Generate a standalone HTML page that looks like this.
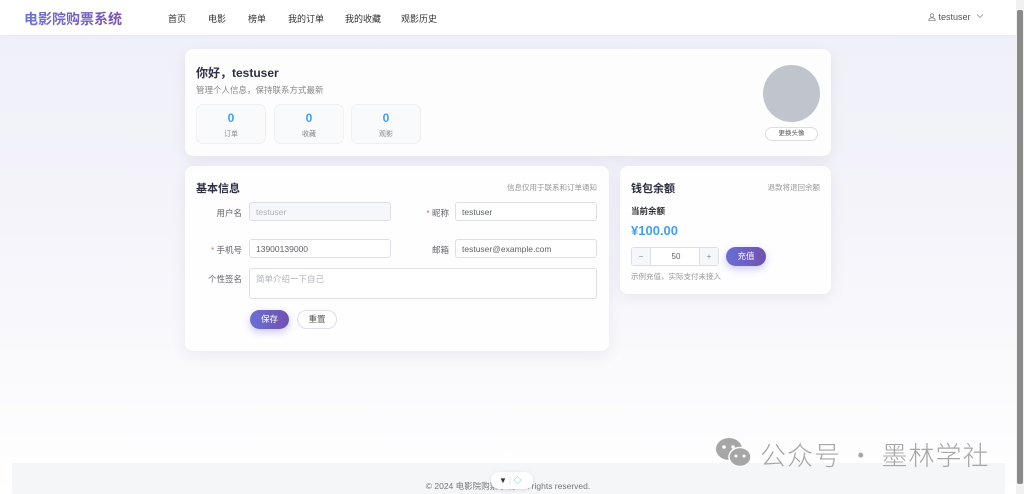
<!DOCTYPE html>
<html><head><meta charset="utf-8">
<style>
*{box-sizing:border-box;margin:0;padding:0}
body{width:1024px;height:494px;overflow:hidden;font-family:"Liberation Sans","Noto Sans CJK SC",sans-serif;background:linear-gradient(180deg,#eef0f8 0%,#f4f3fa 40%,#fbfbfd 80%,#fff 100%);position:relative;color:#303133}
.hdr{position:absolute;left:0;top:0;width:1016px;height:35px;background:#fff;box-shadow:0 1px 3px rgba(0,0,0,.04)}
.logo{position:absolute;left:24px;top:9px;font-size:14px;font-weight:bold;background:linear-gradient(90deg,#6a74d8,#7a4fb0);-webkit-background-clip:text;color:transparent}
.nav{position:absolute;top:12px;font-size:9px;color:#303133}
.user{position:absolute;left:928px;top:12px;font-size:9px;color:#555}
.card{position:absolute;background:rgba(255,255,255,.85);border-radius:8px;box-shadow:0 4px 14px rgba(120,120,160,.12)}
.abs{position:absolute}
.stat{position:absolute;top:104px;width:70px;height:40px;border:1px solid #eef0f4;border-radius:7px;background:#f9fafc;text-align:center}
.stat b{display:block;color:#409eff;font-size:12px;margin-top:6px}
.stat span{display:block;color:#888;font-size:7px;margin-top:4px}
.lbl{position:absolute;font-size:8.5px;color:#606266;text-align:right}
.inp{position:absolute;height:19px;border:1px solid #dcdfe6;border-radius:3px;background:#fff;font-size:8.5px;color:#606266;padding:4px 6px}
.star{color:#f56c6c}
.btn{position:absolute;border-radius:10px;font-size:8.5px;text-align:center}
.pri{background:linear-gradient(90deg,#6a6fd6,#7150b0);color:#fff;box-shadow:0 3px 8px rgba(106,100,214,.35)}
</style></head><body>
<div class="hdr">
<div class="logo">电影院购票系统</div>
<div class="nav" style="left:168px">首页</div>
<div class="nav" style="left:208px">电影</div>
<div class="nav" style="left:248px">榜单</div>
<div class="nav" style="left:288px">我的订单</div>
<div class="nav" style="left:345px">我的收藏</div>
<div class="nav" style="left:401px">观影历史</div>
<div class="user"><svg width="8" height="8" viewBox="0 0 10 10" style="vertical-align:-1px"><circle cx="5" cy="3.2" r="2.2" fill="none" stroke="#888"/><path d="M1 9.5c0-2.5 2-3.5 4-3.5s4 1 4 3.5z" fill="none" stroke="#888"/></svg> testuser &nbsp;<svg width="8" height="6" viewBox="0 0 8 6" style="vertical-align:1px"><path d="M1 1.5l3 3 3-3" fill="none" stroke="#aaa"/></svg></div>
</div>

<div class="card" style="left:185px;top:49px;width:646px;height:107px">
<div class="abs" style="left:11px;top:15px;font-size:12px;font-weight:bold;color:#2c3040">你好，testuser</div>
<div class="abs" style="left:11px;top:35px;font-size:8.5px;color:#888">管理个人信息，保持联系方式最新</div>
<div class="abs" style="left:578px;top:16px;width:57px;height:57px;border-radius:50%;background:#c0c4cc"></div>
<div class="abs" style="left:580px;top:78px;width:53px;height:14px;border:1px solid #dcdfe6;border-radius:7px;background:#fff;font-size:6.5px;color:#555;text-align:center;line-height:12px">更换头像</div>
</div>
<div class="stat" style="left:196px"><b>0</b><span>订单</span></div>
<div class="stat" style="left:274px"><b>0</b><span>收藏</span></div>
<div class="stat" style="left:351px"><b>0</b><span>观影</span></div>

<div class="card" style="left:185px;top:166px;width:424px;height:185px">
<div class="abs" style="left:11px;top:14px;font-size:11px;font-weight:bold;color:#2c3040">基本信息</div>
<div class="abs" style="right:12px;top:16px;font-size:7.5px;color:#999">信息仅用于联系和订单通知</div>
</div>
<div class="lbl" style="left:200px;top:207px;width:42px">用户名</div>
<div class="inp" style="left:249px;top:202px;width:142px;background:#f5f7fa;color:#b0b3b8">testuser</div>
<div class="lbl" style="left:405px;top:207px;width:44px"><span class="star">*</span> 昵称</div>
<div class="inp" style="left:455px;top:202px;width:142px">testuser</div>
<div class="lbl" style="left:200px;top:244px;width:42px"><span class="star">*</span> 手机号</div>
<div class="inp" style="left:249px;top:239px;width:142px">13900139000</div>
<div class="lbl" style="left:405px;top:244px;width:44px">邮箱</div>
<div class="inp" style="left:455px;top:239px;width:142px">testuser@example.com</div>
<div class="lbl" style="left:195px;top:273px;width:47px">个性签名</div>
<div class="inp" style="left:249px;top:268px;width:348px;height:31px;color:#b0b3b8">简单介绍一下自己</div>
<div class="btn pri" style="left:250px;top:310px;width:39px;height:19px;line-height:19px">保存</div>
<div class="btn" style="left:297px;top:310px;width:40px;height:19px;line-height:17px;border:1px solid #dcdfe6;background:#fff;color:#555">重置</div>

<div class="card" style="left:620px;top:166px;width:211px;height:128px">
<div class="abs" style="left:11px;top:14px;font-size:11px;font-weight:bold;color:#2c3040">钱包余额</div>
<div class="abs" style="right:11px;top:16px;font-size:7.5px;color:#999">退款将退回余额</div>
<div class="abs" style="left:11px;top:39px;font-size:8.5px;font-weight:bold;color:#303133">当前余额</div>
<div class="abs" style="left:11px;top:57px;font-size:13px;font-weight:bold;color:#409eff">¥100.00</div>
<div class="abs" style="left:11px;top:81px;width:88px;height:19px;border:1px solid #dcdfe6;border-radius:3px;background:#fff;font-size:8px;color:#606266">
<div class="abs" style="left:0;top:0;width:19px;height:17px;background:#f5f7fa;border-right:1px solid #dcdfe6;text-align:center;line-height:17px;color:#888">−</div>
<div class="abs" style="left:19px;top:0;width:50px;text-align:center;line-height:17px">50</div>
<div class="abs" style="right:0;top:0;width:19px;height:17px;background:#f5f7fa;border-left:1px solid #dcdfe6;text-align:center;line-height:17px;color:#888">+</div>
</div>
<div class="btn pri" style="left:106px;top:81px;width:40px;height:19px;line-height:19px">充值</div>
<div class="abs" style="left:11px;top:105px;font-size:7.5px;color:#999">示例充值，实际支付未接入</div>
</div>

<div class="abs" style="left:12px;top:463px;width:993px;height:31px;background:#f5f6f8"></div>
<div class="abs" style="left:0;top:480px;width:1016px;text-align:center;font-size:8.5px;color:#777">© 2024 电影院购票系统. All rights reserved.</div>
<div class="abs" style="left:491px;top:472px;width:42px;height:17px;border-radius:8px;background:#fff;box-shadow:0 1px 4px rgba(0,0,0,.12);font-size:8px;line-height:17px;padding-left:8px;color:#333">▼ <span style="color:#ddd">|</span> <span style="color:#3c8">◇</span></div>

<svg class="abs" style="left:714px;top:437px" width="40" height="32" viewBox="0 0 40 32"><ellipse cx="15" cy="12" rx="13" ry="11" fill="#a6a6a6"/><ellipse cx="26" cy="20" rx="11" ry="9.5" fill="#a6a6a6" stroke="#fff" stroke-width="1.5"/><circle cx="10" cy="10" r="1.8" fill="#fff"/><circle cx="19" cy="10" r="1.8" fill="#fff"/><circle cx="22" cy="19" r="1.5" fill="#fff"/><circle cx="30" cy="19" r="1.5" fill="#fff"/></svg>
<div class="abs" style="left:760px;top:436px;font-size:26px;color:#a6a6a6;letter-spacing:1px;font-family:'Noto Sans CJK SC',sans-serif;font-weight:300">公众号 · 墨林学社</div>

<div class="abs" style="left:1016px;top:0;width:8px;height:494px;background:#f1f1f1"></div>
<div class="abs" style="left:1017px;top:10px;width:6px;height:474px;background:#8a8a8a;border-radius:2px"></div>
</body></html>
